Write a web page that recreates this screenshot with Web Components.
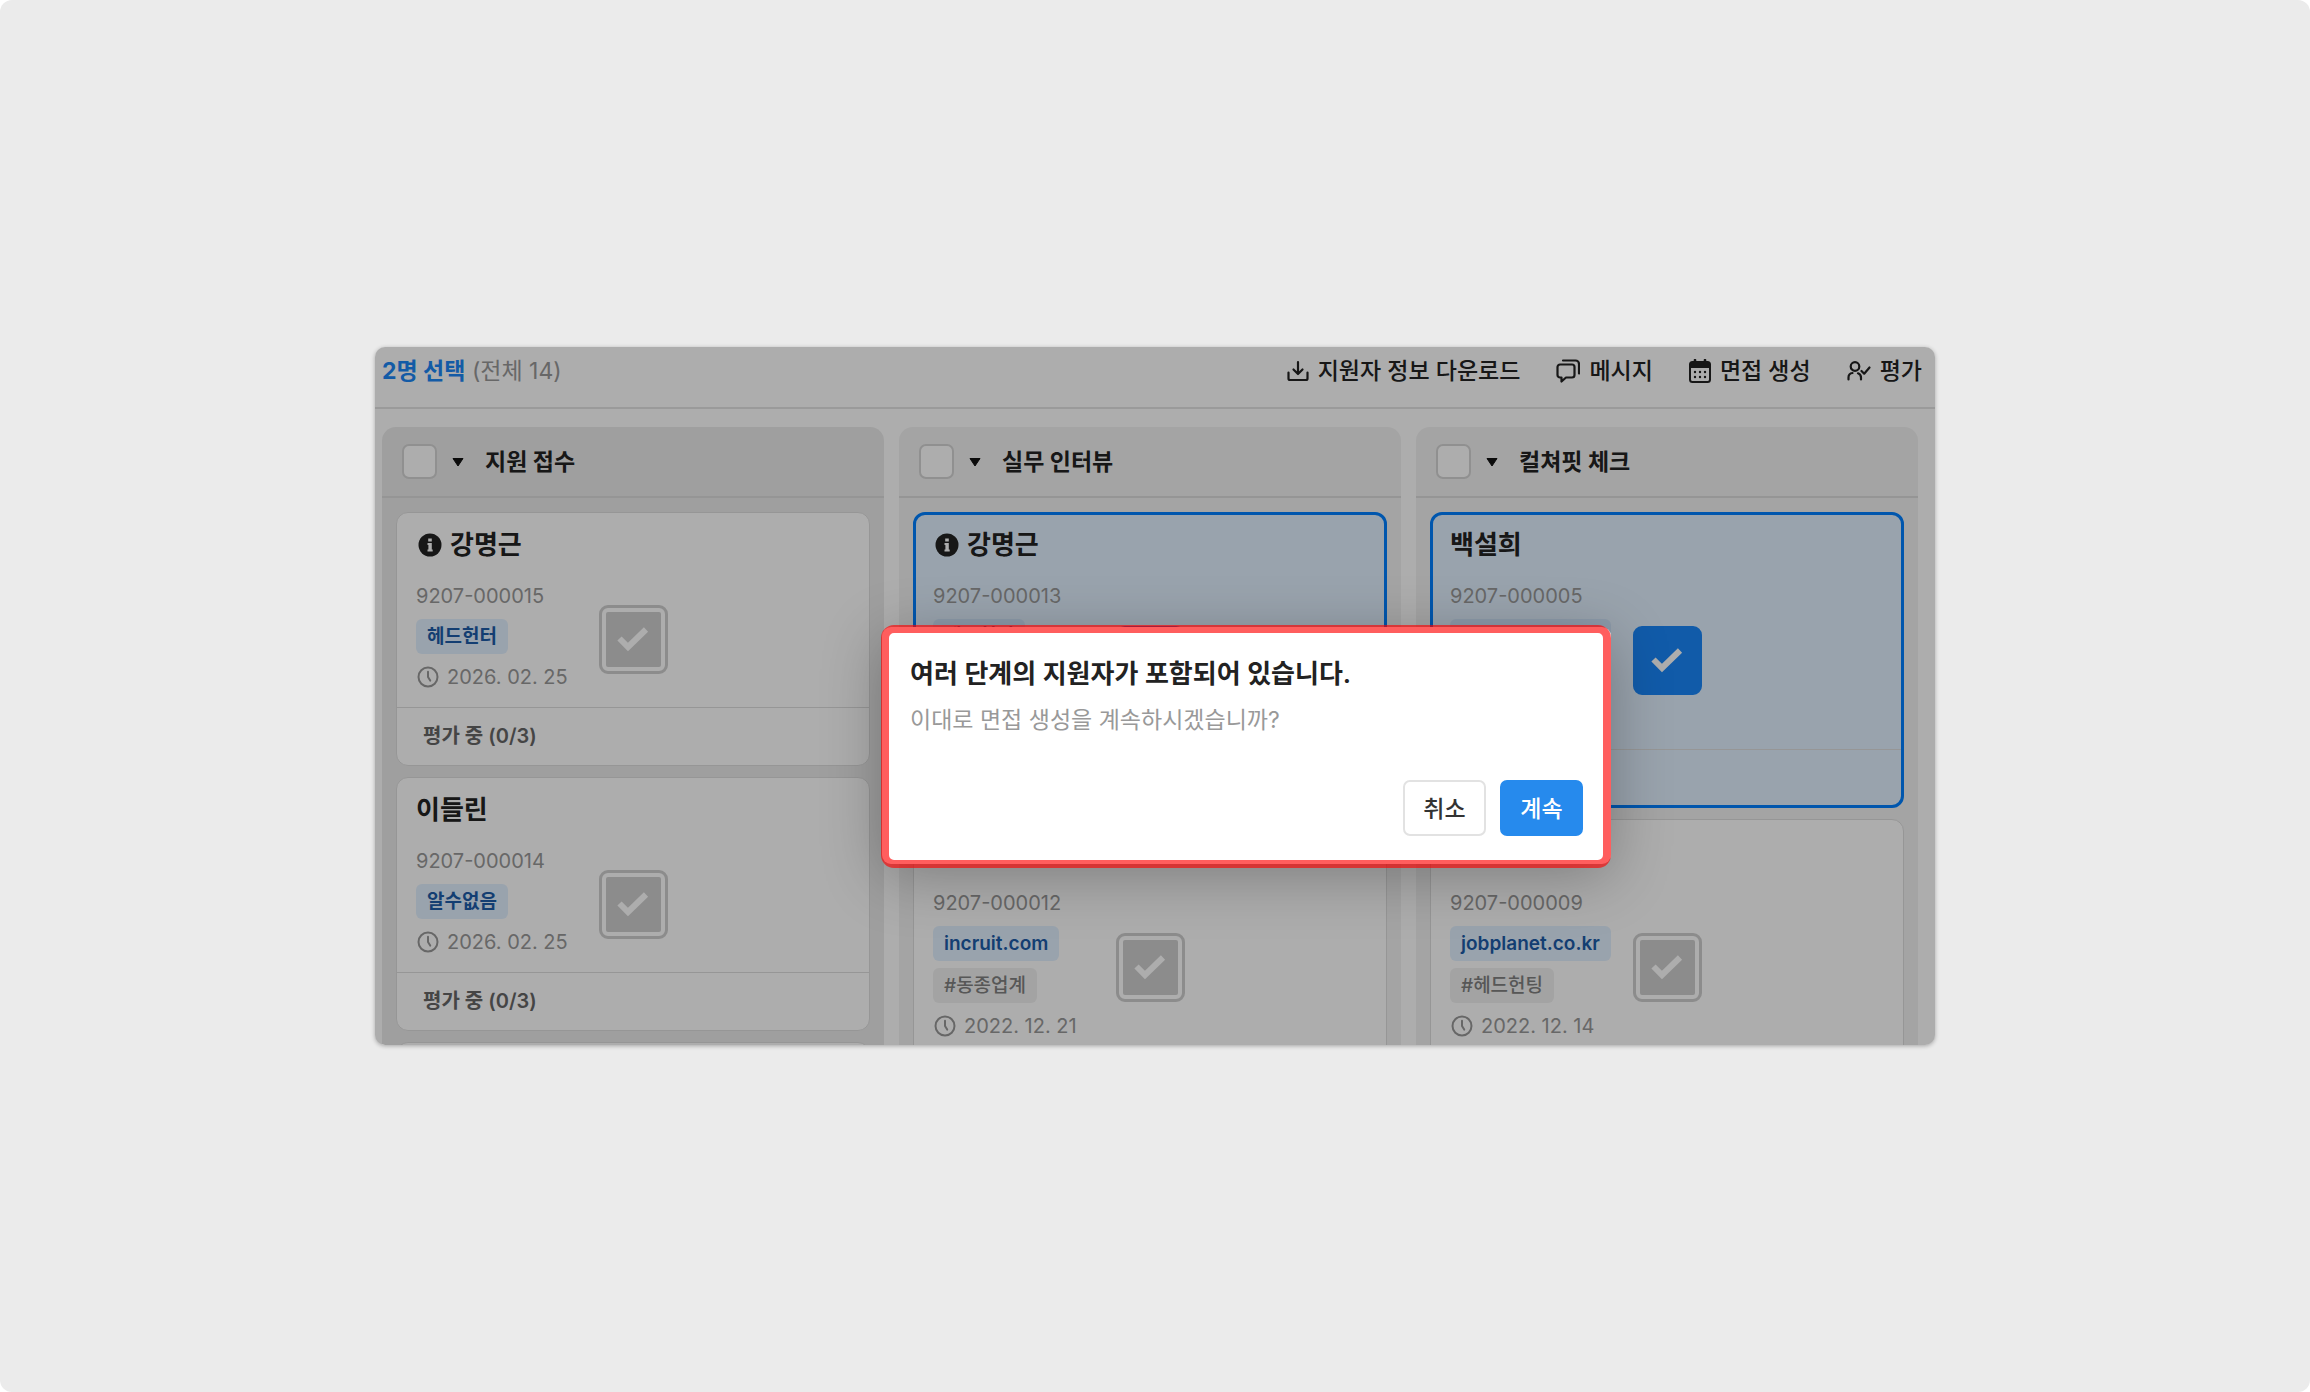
<!DOCTYPE html>
<html lang="ko">
<head>
<meta charset="utf-8">
<title>지원자 관리</title>
<style>
  html {
    background: #fff;
  }
  body {
    margin: 0;
    font-family: Inter, "Noto Sans CJK KR", sans-serif;
    color: #222;
  }
</style>
</head>
<body>
<app-stage>
  <applicant-board>
    <board-toolbar slot="toolbar" selected="2명 선택" total="(전체 14)">
      <tool-button icon="download">지원자 정보 다운로드</tool-button>
      <tool-button icon="message">메시지</tool-button>
      <tool-button icon="calendar">면접 생성</tool-button>
      <tool-button icon="review">평가</tool-button>
    </board-toolbar>

    <stage-column name="지원 접수" tone="dark">
      <applicant-card name="강명근" code="9207-000015" date="2026. 02. 25" status="평가 중 (0/3)" info>
        <card-tag kind="source">헤드헌터</card-tag>
      </applicant-card>
      <applicant-card name="이들린" code="9207-000014" date="2026. 02. 25" status="평가 중 (0/3)">
        <card-tag kind="source">알수없음</card-tag>
      </applicant-card>
      <applicant-card></applicant-card>
    </stage-column>

    <stage-column name="실무 인터뷰">
      <applicant-card name="강명근" code="9207-000013" info selected>
        <card-tag kind="source">헤드헌터</card-tag>
        <card-tag></card-tag>
      </applicant-card>
      <applicant-card name="정하은" code="9207-000012" date="2022. 12. 21">
        <card-tag kind="source">incruit.com</card-tag>
        <card-tag>#동종업계</card-tag>
      </applicant-card>
    </stage-column>

    <stage-column name="컬쳐핏 체크">
      <applicant-card name="백설희" code="9207-000005" selected>
        <card-tag kind="source">jobplanet.co.kr</card-tag>
        <card-tag></card-tag>
      </applicant-card>
      <applicant-card name="배서은" code="9207-000009" date="2022. 12. 14">
        <card-tag kind="source">jobplanet.co.kr</card-tag>
        <card-tag>#헤드헌팅</card-tag>
      </applicant-card>
    </stage-column>

    <confirm-dialog slot="dialog" heading="여러 단계의 지원자가 포함되어 있습니다." cancel="취소" confirm="계속">이대로 면접 생성을 계속하시겠습니까?</confirm-dialog>
  </applicant-board>
</app-stage>

<script>
const ICONS = {
  download: `
    <svg width="22" height="22" viewBox="0 0 22 22" fill="none" stroke="currentColor" stroke-width="2.200" stroke-linecap="round" stroke-linejoin="round">
      <path d="M11 2v11.500M6.500 9.500l4.500 4.500L15.500 9.500M1.500 12.500v6a1.500 1.500 0 0 0 1.500 1.500h16a1.500 1.500 0 0 0 1.500-1.500v-6"/>
    </svg>`,
  message: `
    <svg width="24" height="24" viewBox="0 0 24 24" fill="none" stroke="currentColor" stroke-width="2.200" stroke-linecap="round" stroke-linejoin="round">
      <path d="M4 5.500h12a2.500 2.500 0 0 1 2.500 2.500v8a2.500 2.500 0 0 1-2.500 2.500H10L5.500 22.500V18.500H4A2.500 2.500 0 0 1 1.500 16V8A2.500 2.500 0 0 1 4 5.500z"/>
      <path d="M7 1.500h12.500A3.500 3.500 0 0 1 23 5v9.500"/>
    </svg>`,
  calendar: `
    <svg width="22" height="24" viewBox="0 0 22 24" fill="none" stroke="currentColor" stroke-width="2" stroke-linecap="round">
      <rect x="1" y="3" width="20" height="20" rx="2.500"/>
      <path d="M2 4h18v4H2z" fill="currentColor"/>
      <path d="M6 1v4M16 1v4" stroke-width="2.600"/>
      <path d="M6 13h.01M11 13h.01M16 13h.01M6 18h.01M11 18h.01M16 18h.01" stroke-width="2.400"/>
    </svg>`,
  review: `
    <svg width="24" height="22" viewBox="0 0 24 22" fill="none" stroke="currentColor" stroke-width="2.200" stroke-linecap="round" stroke-linejoin="round">
      <circle cx="8" cy="6.500" r="4.300"/>
      <path d="M1.500 19.500v-2a4.500 4.500 0 0 1 4-4.500M14 19.500v-2a4.500 4.500 0 0 0-3-4.200M14.500 11l2.700 2.700L22.500 7.500"/>
    </svg>`,
  info: `
    <svg width="24" height="24" viewBox="0 0 24 24">
      <circle cx="12" cy="12" r="11.500" fill="#222"/>
      <path d="M10.200 5.500h3.600v3h-3.600zM9.500 10h4.300v6.500h.9v2H9.500v-2h.9v-4.500h-.9z" fill="#fff"/>
    </svg>`,
  clock: `
    <svg width="22" height="22" viewBox="0 0 22 22" fill="none" stroke="currentColor" stroke-width="2" stroke-linecap="round" stroke-linejoin="round">
      <circle cx="11" cy="11" r="9.500"/>
      <path d="M11 5.800V11l2.200 3.600"/>
    </svg>`,
  check: `
    <svg width="32" height="26" viewBox="0 0 32 26" fill="none" stroke="#fff" stroke-width="6">
      <path d="M2.500 12.500l8.500 8.500L29 3.500"/>
    </svg>`
};

class AppStage extends HTMLElement {
  connectedCallback() {
    this.attachShadow({ mode: 'open' }).innerHTML = `
      <style>
        :host {
          display: flex;
          align-items: center;
          justify-content: center;
          box-sizing: border-box;
          min-height: 100vh;
          padding: 40px;
          border-radius: 12px;
          background: #ebebeb;
        }
      </style>
      <slot></slot>
    `;
  }
}

class ApplicantBoard extends HTMLElement {
  connectedCallback() {
    this.attachShadow({ mode: 'open' }).innerHTML = `
      <style>
        :host {
          display: flex;
          flex-direction: column;
          position: relative;
          width: 100%;
          max-width: 1560px;
          height: 698px;
          border-radius: 10px;
          overflow: hidden;
          background: #fff;
          box-shadow: 0 1px 4px rgba(0, 0, 0, 0.3);
        }
        .columns {
          display: flex;
          align-items: stretch;
          gap: 15px;
          flex: 1;
          min-height: 0;
          padding: 18px 17px 0 7px;
        }
        .scrim {
          position: absolute;
          inset: 0;
          background: rgba(0, 0, 0, 0.32);
        }
      </style>
      <slot name="toolbar"></slot>
      <main class="columns"><slot></slot></main>
      <div class="scrim"></div>
      <slot name="dialog"></slot>
    `;
  }
}

class BoardToolbar extends HTMLElement {
  connectedCallback() {
    this.attachShadow({ mode: 'open' }).innerHTML = `
      <style>
        :host {
          display: flex;
          align-items: center;
          justify-content: space-between;
          height: 48px;
          padding: 0 13px 12px 7px;
          border-bottom: 2px solid #e4e4e4;
          font-size: 23px;
          line-height: 32px;
        }
        strong {
          color: #1d87f5;
          font-weight: 700;
        }
        .total {
          color: #999;
        }
        nav {
          display: flex;
          gap: 36px;
        }
      </style>
      <div><strong>${this.getAttribute('selected')}</strong> <span class="total">${this.getAttribute('total')}</span></div>
      <nav><slot></slot></nav>
    `;
  }
}

class ToolButton extends HTMLElement {
  connectedCallback() {
    this.attachShadow({ mode: 'open' }).innerHTML = `
      <style>
        :host {
          display: block;
        }
        button {
          display: flex;
          align-items: center;
          gap: 9px;
          padding: 0;
          border: 0;
          background: none;
          color: #222;
          font: inherit;
          font-weight: 500;
        }
      </style>
      <button type="button">${ICONS[this.getAttribute('icon')]}<span><slot></slot></span></button>
    `;
  }
}

class StageColumn extends HTMLElement {
  connectedCallback() {
    const name = this.getAttribute('name');
    this.attachShadow({ mode: 'open' }).innerHTML = `
      <style>
        :host {
          display: flex;
          flex-direction: column;
          flex: 1;
          min-width: 0;
          border-radius: 14px 14px 0 0;
          background: #f2f2f2;
        }
        :host([tone="dark"]) {
          background: #ebebeb;
        }
        header {
          display: flex;
          flex-shrink: 0;
          align-items: center;
          height: 69px;
          padding: 0 20px;
          border-bottom: 2px solid #dcdcdc;
        }
        input {
          appearance: none;
          box-sizing: border-box;
          width: 35px;
          height: 35px;
          margin: 0 15px 0 0;
          border: 2px solid #d4d4d4;
          border-radius: 7px;
          background: #fff;
        }
        button {
          display: flex;
          margin: 0 21px 0 0;
          padding: 0;
          border: 0;
          background: none;
        }
        h2 {
          margin: 0;
          font-size: 23px;
          font-weight: 700;
          line-height: 32px;
        }
        .list {
          display: flex;
          flex-direction: column;
          gap: 11px;
          padding: 14px;
        }
      </style>
      <header>
        <input type="checkbox" aria-label="${name} 전체 선택">
        <button type="button" aria-label="${name} 메뉴"><svg width="12" height="10" viewBox="0 0 12 10"><path d="M1 1.500h10L6 9z" fill="#111" stroke="#111" stroke-linejoin="round"/></svg></button>
        <h2>${name}</h2>
      </header>
      <div class="list"><slot></slot></div>
    `;
  }
}

class CardTag extends HTMLElement {
  connectedCallback() {
    this.attachShadow({ mode: 'open' }).innerHTML = `
      <style>
        :host {
          display: block;
          box-sizing: border-box;
          height: 35px;
          padding: 0 11px;
          border-radius: 6px;
          background: #f1f1f1;
          color: #808080;
          font-size: 19px;
          font-weight: 500;
          line-height: 35px;
        }
        :host([kind="source"]) {
          background: var(--tag-background, #e2f1ff);
          color: #1c5ca8;
          font-weight: 600;
        }
      </style>
      <slot></slot>
    `;
  }
}

class ApplicantCard extends HTMLElement {
  connectedCallback() {
    const name = this.getAttribute('name') || '';
    const code = this.getAttribute('code') || '';
    const date = this.getAttribute('date');
    const status = this.getAttribute('status') || '';
    this.attachShadow({ mode: 'open' }).innerHTML = `
      <style>
        :host {
          display: block;
          position: relative;
          border: 1px solid #dedede;
          border-radius: 12px;
          background: #fff;
        }
        :host([selected]) {
          --tag-background: #cfe3fa;
          background: #e2f1ff;
          outline: 3px solid #007fff;
          outline-offset: -3px;
          border-color: transparent;
        }
        .body {
          padding: 14px 19px 16px;
        }
        h3 {
          display: flex;
          align-items: center;
          gap: 8px;
          height: 36px;
          margin: 0 0 19px;
          font-size: 26px;
          font-weight: 700;
          line-height: 36px;
        }
        .code,
        .date {
          height: 28px;
          color: #999;
          font-size: 20px;
          line-height: 28px;
        }
        .tags {
          display: flex;
          flex-direction: column;
          align-items: flex-start;
          gap: 7px;
          margin: 9px 0;
        }
        .date {
          display: flex;
          align-items: center;
          gap: 8px;
        }
        h3 svg {
          margin-left: 2px;
        }
        .date svg {
          margin-left: 1px;
        }
        footer {
          height: 57px;
          padding: 0 26px;
          border-top: 1px solid #dedede;
          color: #666;
          font-size: 20px;
          font-weight: 600;
          line-height: 57px;
        }
        /* large tick box floating over the middle of the card */
        label {
          display: grid;
          place-items: center;
          position: absolute;
          inset: 0;
          margin: auto;
          width: 69px;
          height: 69px;
        }
        input {
          appearance: none;
          grid-area: 1 / 1;
          box-sizing: border-box;
          width: 69px;
          height: 69px;
          margin: 0;
          padding: 4px;
          border: 3px solid #cfcfcf;
          border-radius: 9px;
          background: #cfcfcf content-box;
        }
        input:checked {
          border-color: #1a87fa;
          background: #1a87fa border-box;
        }
        label svg {
          grid-area: 1 / 1;
        }
      </style>
      <div class="body">
        <h3>${this.hasAttribute('info') ? ICONS.info : ''}<span>${name}</span></h3>
        <div class="code">${code}</div>
        <div class="tags"><slot></slot></div>
        <div class="date">${date ? ICONS.clock + `<span>${date}</span>` : ''}</div>
      </div>
      <footer>${status}</footer>
      <label><input type="checkbox" aria-label="${name} 선택" ${this.hasAttribute('selected') ? 'checked' : ''}>${ICONS.check}</label>
    `;
  }
}

class ConfirmDialog extends HTMLElement {
  connectedCallback() {
    this.attachShadow({ mode: 'open' }).innerHTML = `
      <style>
        :host {
          display: block;
          position: absolute;
          top: 280px;
          left: 507px;
        }
        section {
          display: flex;
          flex-direction: column;
          position: relative;
          box-sizing: border-box;
          width: 729px;
          height: 237px;
          padding: 29px 28px 28px;
          border-radius: 9px;
          background: #fff;
          box-shadow: 0 12px 60px rgba(0, 0, 0, 0.28);
        }
        /* highlight ring round the dialog */
        section::after {
          content: "";
          position: absolute;
          inset: -2px 0 -4px -1px;
          border: 8px solid rgba(255, 0, 0, 0.63);
          border-radius: 13px;
          pointer-events: none;
        }
        h1 {
          margin: 0 0 12px;
          font-size: 26px;
          font-weight: 600;
          line-height: 36px;
        }
        p {
          margin: 0;
          color: #999;
          font-size: 23px;
          line-height: 32px;
        }
        .actions {
          display: flex;
          justify-content: flex-end;
          gap: 14px;
          margin-top: auto;
        }
        button {
          box-sizing: border-box;
          width: 83px;
          height: 56px;
          padding: 0 0 2px;
          border: 2px solid #e2e2e2;
          border-radius: 7px;
          background: #fff;
          color: #333;
          font: inherit;
          font-size: 23px;
          font-weight: 500;
        }
        .primary {
          border-color: #268aed;
          background: #268aed;
          color: #fff;
        }
      </style>
      <section role="dialog" aria-modal="true" aria-labelledby="heading">
        <h1 id="heading">${this.getAttribute('heading')}</h1>
        <p><slot></slot></p>
        <div class="actions">
          <button type="button">${this.getAttribute('cancel')}</button>
          <button type="button" class="primary">${this.getAttribute('confirm')}</button>
        </div>
      </section>
    `;
  }
}

customElements.define('app-stage', AppStage);
customElements.define('applicant-board', ApplicantBoard);
customElements.define('board-toolbar', BoardToolbar);
customElements.define('tool-button', ToolButton);
customElements.define('stage-column', StageColumn);
customElements.define('card-tag', CardTag);
customElements.define('applicant-card', ApplicantCard);
customElements.define('confirm-dialog', ConfirmDialog);
</script>
</body>
</html>
